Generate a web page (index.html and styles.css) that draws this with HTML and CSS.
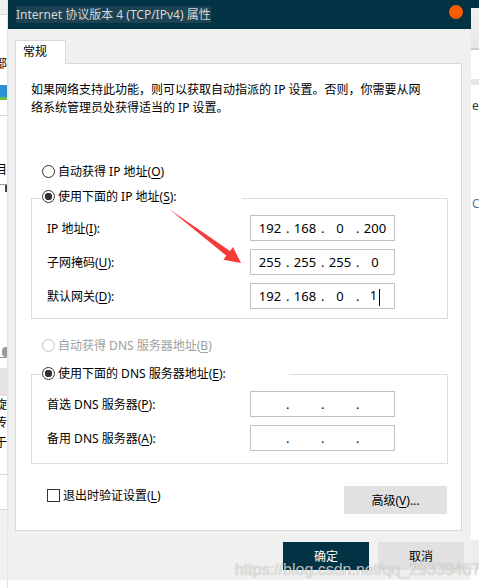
FILE: index.html
```html
<!DOCTYPE html>
<html lang="zh-CN">
<head>
    <meta charset="UTF-8">
    <meta name="viewport" content="width=device-width, initial-scale=1.0">
    <title>Internet 协议版本 4 (TCP/IPv4) 属性</title>
    <link rel="stylesheet" href="styles.css">
</head>
<body>
<div class="screen">
    <div class="side side-left">
        <div class="sl-top"></div>
        <div class="sl-gap" style="height: 40px"></div>
        <div class="sl-text">部</div>
        <div class="sl-gap" style="height: 12px"></div>
        <div class="sl-icon"></div>
        <div class="sl-gap" style="height: 15px"></div>
        <div class="sl-line"></div>
        <div class="sl-gap" style="height: 45px"></div>
        <div class="sl-text">目</div>
        <div class="sl-gap" style="height: 5px"></div>
        <div class="sl-line sl-line-dark"></div>
        <div class="sl-mark"></div>
        <div class="sl-gap" style="height: 155px"></div>
        <div class="sl-knob"></div>
        <div class="sl-line sl-line-dark"></div>
        <div class="sl-gap" style="height: 10px"></div>
        <div class="sl-block"></div>
        <div class="sl-text">旋</div>
        <div class="sl-text sl-text-tight">传</div>
        <div class="sl-text sl-text-tight">于</div>
        <div class="sl-gap" style="height: 20px"></div>
        <div class="sl-line"></div>
        <div class="sl-gap" style="height: 34px"></div>
        <div class="sl-line"></div>
        <div class="sl-bottom"></div>
    </div>

    <div class="dialog">
        <div class="titlebar">
            <span class="title">Internet 协议版本 4 (TCP/IPv4) 属性</span>
            <span class="title-dot"></span>
        </div>

        <div class="dialog-body">
            <div class="tab">常规</div>
            <div class="panel">
                <p class="desc">如果网络支持此功能，则可以获取自动指派的 IP 设置。否则，你需要从网<br>络系统管理员处获得适当的 IP 设置。</p>

                <div class="radio-row radio-first">
                    <span class="radio"></span>自动获得 IP 地址(<u>O</u>)
                </div>

                <fieldset class="group">
                    <legend class="group-title group-title-ip">
                        <span class="radio-row"><span class="radio checked"></span>使用下面的 IP 地址(<u>S</u>):</span>
                    </legend>
                    <div class="fields fields-ip">
                        <span>IP 地址(<u>I</u>):</span>
                        <div class="ip"><span>192</span><i>.</i><span>168</span><i>.</i><span>0</span><i>.</i><span>200</span></div>
                        <span>子网掩码(<u>U</u>):</span>
                        <div class="ip"><span>255</span><i>.</i><span>255</span><i>.</i><span>255</span><i>.</i><span>0</span></div>
                        <span>默认网关(<u>D</u>):</span>
                        <div class="ip"><span>192</span><i>.</i><span>168</span><i>.</i><span>0</span><i>.</i><span>1<b class="caret"></b></span></div>
                    </div>
                </fieldset>

                <div class="radio-row radio-dns disabled">
                    <span class="radio"></span>自动获得 DNS 服务器地址(<u>B</u>)
                </div>

                <fieldset class="group group-dns">
                    <legend class="group-title group-title-dns">
                        <span class="radio-row"><span class="radio checked"></span>使用下面的 DNS 服务器地址(<u>E</u>):</span>
                    </legend>
                    <div class="fields fields-dns">
                        <span>首选 DNS 服务器(<u>P</u>):</span>
                        <div class="ip"><span></span><i>.</i><span></span><i>.</i><span></span><i>.</i><span></span></div>
                        <span>备用 DNS 服务器(<u>A</u>):</span>
                        <div class="ip"><span></span><i>.</i><span></span><i>.</i><span></span><i>.</i><span></span></div>
                    </div>
                </fieldset>

                <div class="panel-footer">
                    <div class="check-row"><span class="checkbox"></span>退出时验证设置(<u>L</u>)</div>
                    <button class="btn btn-adv">高级(<u>V</u>)...</button>
                </div>
            </div>

            <div class="actions">
                <button class="btn btn-primary">确定</button>
                <button class="btn">取消</button>
            </div>
        </div>

        <div class="watermark">https://blog.csdn.net/qq_29339467</div>
    </div>

    <div class="side side-right">
        <div class="sr-top"></div>
        <div class="sr-bar"></div>
        <div class="sr-gap" style="height: 29px"></div>
        <div class="sr-band"></div>
        <div class="sr-gap" style="height: 12px"></div>
        <div class="sr-text">er</div>
        <div class="sr-gap" style="height: 80px"></div>
        <div class="sr-text sr-text-blue">C</div>
        <div class="sr-gap" style="height: 327px"></div>
        <div class="sr-grey"></div>
    </div>

    <svg class="arrow" viewBox="165 205 80 62" width="80" height="62">
        <polygon points="169,209 230,251 233,247 241,263 223.4,259.8 226.4,255.8" fill="#f53a3a"/>
    </svg>
</div>
</body>
</html>
```

FILE: styles.css
```css
body {
    margin: 0;
    background-color: #fff;
    font-family: "Noto Sans", "Noto Sans CJK SC", sans-serif;
    font-size: 12px;
    color: #000;
}

.screen {
    position: relative;
    display: flex;
    width: 479px;
    height: 588px;
    overflow: hidden;
}

u {
    text-decoration-thickness: 1px;
    text-underline-offset: 2px;
}

/* windows peeking out behind the dialog */
.side {
    width: 8px;
    flex-shrink: 0;
    display: flex;
    flex-direction: column;
    overflow: hidden;
}
.side-left {
    border-right: 1px solid #e4e4e4;
    box-sizing: border-box;
}
.sl-top {
    height: 14px;
    background-color: #f0f0f0;
    border-bottom: 1px solid #d8d8d8;
}
.sl-text {
    height: 18px;
    line-height: 18px;
    margin-left: -5px;
    white-space: nowrap;
}
.sl-text-tight {
    height: 20px;
}
.sl-icon {
    height: 12px;
    width: 7px;
    background-color: #2b8fd6;
    border-bottom: 3px solid #6bbf4a;
}
.sl-line {
    height: 1px;
    background-color: #d6d6d6;
}
.sl-line-dark {
    background-color: #8e99a6;
}
.sl-mark {
    height: 7px;
    width: 3px;
    margin-left: 5px;
    background-color: #444;
}
.sl-knob {
    height: 10px;
    margin-left: 2px;
    border-radius: 4px 0 0 4px;
    background-color: #9a9a9a;
}
.sl-block {
    height: 28px;
    background-color: #e3e3e3;
}
.sl-bottom {
    flex: 1;
    background-color: #f0f0f0;
    margin-bottom: 8px;
}

.sr-top {
    height: 8px;
    background-color: #023345;
}
.sr-bar {
    height: 40px;
    background: linear-gradient(#f2f2f2, #e6e6e6);
    border-bottom: 2px solid #cfcfcf;
}
.sr-band {
    height: 6px;
    background-color: #e6e6e6;
}
.sr-text {
    height: 18px;
    line-height: 18px;
    margin-left: 1px;
    color: #333;
    white-space: nowrap;
}
.sr-text-blue {
    color: #4f7aa6;
}
.sr-grey {
    height: 30px;
    background-color: #ececec;
}

/* dialog */
.dialog {
    position: relative;
    width: 463px;
    height: 580px;
    flex-shrink: 0;
    background-color: #f0f0f0;
}

.titlebar {
    height: 29px;
    display: flex;
    align-items: center;
    padding-left: 8px;
    background-color: #023345;
}
.title {
    line-height: 17px;
    background-color: #1d4352;
    color: #d6d6d6;
    white-space: nowrap;
}
.title-dot {
    align-self: flex-start;
    width: 14px;
    height: 14px;
    margin: 5px 8px 0 auto;
    border-radius: 50%;
    background-color: #fa5c05;
}

.dialog-body {
    padding: 11px 9px 0 7px;
}

.tab {
    position: relative;
    z-index: 1;
    width: 51px;
    height: 24px;
    box-sizing: border-box;
    margin-bottom: -1px;
    padding-left: 7px;
    line-height: 22px;
    background-color: #fff;
    border: 1px solid #d9d9d9;
    border-bottom: none;
}

.panel {
    height: 468px;
    box-sizing: border-box;
    background-color: #fff;
    border: 1px solid #d9d9d9;
}

.desc {
    margin: 17px 0 0 15px;
    line-height: 18px;
}

.radio-row {
    display: flex;
    align-items: center;
    height: 18px;
    white-space: nowrap;
}
.radio-first {
    margin: 45px 0 0 26px;
}
.radio-dns {
    margin: 17px 0 0 26px;
}
.disabled {
    color: #a0a0a0;
}
.radio {
    width: 13px;
    height: 13px;
    box-sizing: border-box;
    margin-right: 3px;
    border: 1px solid #333;
    border-radius: 50%;
    background-color: #fff;
}
.radio.checked {
    background: radial-gradient(circle, #333 0 3.5px, #fff 4px);
}
.disabled .radio {
    border-color: #c4c4c4;
}

.group {
    margin: 7px 13px 0 15px;
    padding: 0;
    min-width: 0;
    border: 1px solid #dcdcdc;
}
.group-dns {
    margin-top: 10px;
}
.group-title {
    margin-left: 9px;
    padding: 0 0 0 1px;
    box-sizing: border-box;
}
.group-title-ip {
    width: 201px;
    padding-bottom: 4px;
}
.group-title-dns {
    width: 248px;
    padding-bottom: 2px;
}

.fields {
    display: grid;
    grid-template-columns: 203px 145px;
    row-gap: 8px;
    align-items: center;
    padding-left: 15px;
}
.fields-ip {
    padding-top: 6px;
    padding-bottom: 9px;
}
.fields-dns {
    padding-top: 7px;
    padding-bottom: 12px;
}

.ip {
    height: 26px;
    box-sizing: border-box;
    display: grid;
    grid-template-columns: 32px 3px 32px 3px 32px 3px 32px;
    align-items: center;
    padding-left: 3px;
    border: 1px solid #c2c2c2;
    background-color: #fff;
    font-size: 13px;
}
.ip span,
.ip i {
    text-align: center;
    font-style: normal;
}
.caret {
    display: inline-block;
    width: 0;
    height: 17px;
    margin-left: 2px;
    vertical-align: middle;
    border-left: 1px solid #000;
}

.panel-footer {
    display: flex;
    justify-content: space-between;
    align-items: flex-start;
    margin: 22px 14px 0 31px;
}
.check-row {
    display: flex;
    align-items: center;
    height: 18px;
}
.checkbox {
    width: 13px;
    height: 13px;
    box-sizing: border-box;
    margin-right: 3px;
    border: 1px solid #333;
    background-color: #fff;
}

.btn {
    width: 86px;
    height: 28px;
    padding: 0;
    border: none;
    background-color: #e1e1e1;
    color: #000;
    font-family: inherit;
    font-size: 12px;
}
.btn-adv {
    width: 103px;
}
.btn-primary {
    background-color: #023345;
    color: #fff;
}

.actions {
    display: flex;
    justify-content: flex-end;
    gap: 9px;
    margin: 11px -2px 0 0;
}

.watermark {
    position: absolute;
    left: 227px;
    top: 561px;
    font-family: "Liberation Sans", Arial, sans-serif;
    font-size: 16px;
    line-height: 18px;
    color: rgba(255, 255, 255, 0.72);
    text-shadow: 0 0 1px rgba(0, 0, 0, 0.4);
    white-space: nowrap;
}

.arrow {
    position: absolute;
    left: 165px;
    top: 205px;
}
```
